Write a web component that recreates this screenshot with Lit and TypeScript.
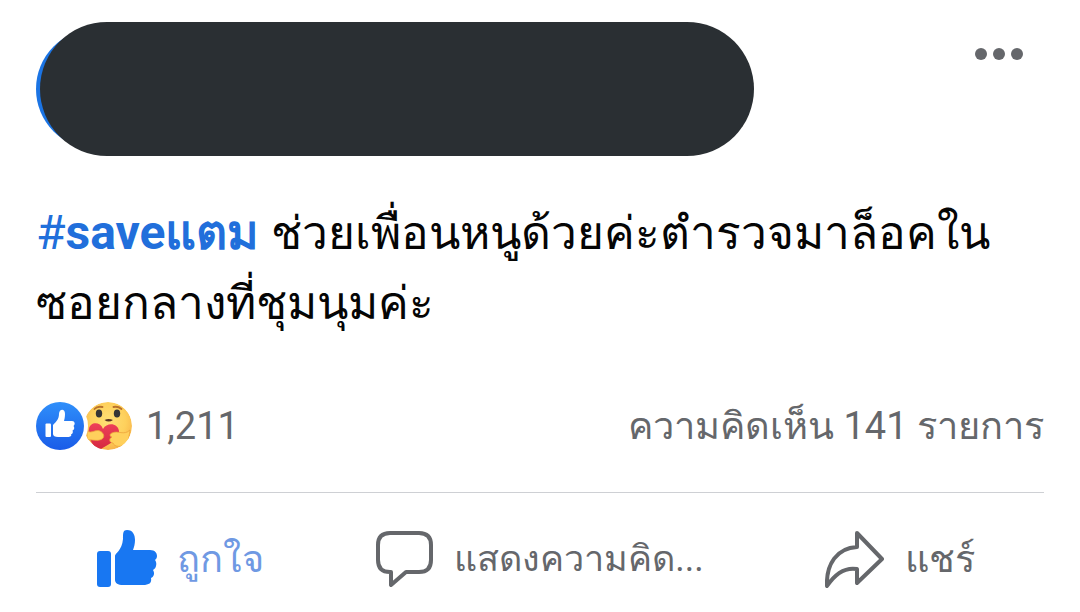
import { LitElement, html, css } from "lit";
import { customElement, property } from "lit/decorators.js";

@customElement("post-header")
class PostHeader extends LitElement {
  static styles = css`
    :host { display: flex; justify-content: space-between; align-items: flex-start; }
    .author { position: relative; display: flex; align-items: center; flex: 0 1 718px; height: 134px; }
    .avatar { width: 120px; height: 120px; border-radius: 50%; background: #1b74e4; }
    .cover { position: absolute; inset: 0 0 0 4px; border-radius: 67px; background: #2a2f33; }
    .more { border: 0; background: none; padding: 26px 20px; margin: 0; display: flex; cursor: pointer; }
    .more svg { display: block; }
  `;
  render() {
    return html`
      <div class="author"><div class="avatar"></div><div class="cover"></div></div>
      <button class="more" aria-label="เพิ่มเติม">
        <svg width="50" height="12" viewBox="0 0 50 12" fill="#65676b">
          <circle cx="7" cy="6" r="6" /><circle cx="25" cy="6" r="6" /><circle cx="43" cy="6" r="6" />
        </svg>
      </button>
    `;
  }
}

@customElement("post-reactions")
class PostReactions extends LitElement {
  @property() count = "";
  @property() comments = "";
  static styles = css`
    :host { display: flex; justify-content: space-between; align-items: center; color: #65676b; font-size: 38px; line-height: 56px; }
    .group { display: flex; align-items: center; gap: 12px; }
    svg { display: block; }
  `;
  render() {
    return html`
      <div class="group">
        <svg width="98" height="48" viewBox="0 0 98 48">
          <defs>
            <linearGradient id="blue" x1="0" y1="0" x2="0" y2="1"><stop offset="0" stop-color="#2f8ffa" /><stop offset="1" stop-color="#1a5ce8" /></linearGradient>
            <radialGradient id="face" cx=".5" cy=".4" r=".62"><stop offset="0" stop-color="#ffe076" /><stop offset=".6" stop-color="#fed05c" /><stop offset="1" stop-color="#f7b047" /></radialGradient>
            <linearGradient id="heart" x1="0" y1="0" x2="0" y2="1"><stop offset="0" stop-color="#ee4058" /><stop offset="1" stop-color="#d3263f" /></linearGradient>
            <clipPath id="disc"><circle cx="72" cy="24" r="24" /></clipPath>
          </defs>
          <g clip-path="url(#disc)">
            <circle cx="72" cy="24" r="24" fill="url(#face)" />
            <path d="M58.500 7Q61 4 66.500 5M77.500 5Q82 4 85.500 7" fill="none" stroke="#b9722c" stroke-width="1.800" stroke-linecap="round" />
            <ellipse cx="63" cy="11.500" rx="3.200" ry="4" fill="#363535" />
            <ellipse cx="81" cy="11.500" rx="3.200" ry="4" fill="#363535" />
            <path d="M68.500 18Q72.500 16 77 18Q72.500 21 68.500 18Z" fill="#5a3423" />
            <path d="M62 49C57 43 51 35 53 27C54 20 64 19 67 27C71 20 82 21 83 29C84 38 72 42 62 49Z" fill="url(#heart)" />
            <path d="M51 29C56 32 59 27 64 29C68 31 69 35 66 37C61 40 56 37 51 38Z" fill="#ffd05c" stroke="#eca43c" stroke-width=".8" />
            <path d="M94 28C88 34 82 28 76 31C73 32 74 35 76 35C72 37 74 41 77 41C78 45 86 46 92 41Z" fill="#ffd05c" stroke="#eca43c" stroke-width=".8" />
          </g>
          <circle cx="24" cy="24" r="28" fill="#fff" />
          <circle cx="24" cy="24" r="24" fill="url(#blue)" />
          <rect x="9.500" y="21.500" width="5.500" height="13.500" rx="1" fill="#fff" />
          <path d="M17 23C20 20 23 17 23 12C23 7 29 6 29 12C29 15 28.500 17 28 19H36C39 19 39.500 22.500 37.500 24C39 26 38 28 36.500 28.500C37.500 31 36 32 35 32.500C36 34 34 35 32 35H22C19 35 17 34 17 32Z" fill="#fff" />
        </svg>
        <span>${this.count}</span>
      </div>
      <span>${this.comments}</span>
    `;
  }
}

@customElement("post-actions")
class PostActions extends LitElement {
  static styles = css`
    :host { display: grid; grid-template-columns: 2fr 3fr 2fr; border-top: 1px solid #ced0d4; padding-top: 32px; }
    button { display: flex; align-items: center; justify-content: center; gap: 20px; border: 0; padding: 0; margin: 0; background: none; color: #65676b; font-family: inherit; font-size: 38px; line-height: 68px; white-space: nowrap; cursor: pointer; }
    .liked { color: #6f99e3; }
    .comment { font-size: 36px; }
    svg { display: block; flex: none; }
  `;
  render() {
    return html`
      <button class="liked">
        <svg width="60" height="58" viewBox="0 0 60 58" fill="#1877f2">
          <rect x="0" y="21" width="14" height="36" rx="3" />
          <path d="M18 26C18 23 25 21 26 9C26 3 26 0 30 0C36 0 38 5 38 10C38 14 37 17 36 20H53C58 20 60 23 60 26C60 28 59 29 58 30C60 32 60 38 56 40C58 43 57 47 54 48C55 53 52 55 46 55H26C21 55 18 53 18 50Z" />
        </svg>
        <span>ถูกใจ</span>
      </button>
      <button class="comment">
        <svg width="58" height="56" viewBox="0 0 58 56" fill="none" stroke="#65676b" stroke-width="4" stroke-linejoin="round">
          <path d="M14 2H43Q55 2 55 14V29Q55 41 43 41H30L15 54V41H14Q2 41 2 29V14Q2 2 14 2Z" />
        </svg>
        <span>แสดงความคิด...</span>
      </button>
      <button>
        <svg width="60" height="58" viewBox="0 0 60 58" fill="none" stroke="#65676b" stroke-width="4" stroke-linejoin="round">
          <path d="M32 3L57 29L32 53V39C20 37 10 44 2 56C1 34 12 18 32 17Z" />
        </svg>
        <span>แชร์</span>
      </button>
    `;
  }
}

@customElement("app-root")
class AppRoot extends LitElement {
  static styles = css`
    :host { display: block; min-height: 100vh; box-sizing: border-box; padding: 22px 36px 0; background: #fff; color: #050505; font-family: Roboto, "Noto Sans", sans-serif; }
    .message { margin: 42px 0 60px; font-size: 46px; line-height: 70px; }
    .tag { color: #216fdb; font-size: 48px; text-decoration: none; }
    .tag b { font-weight: 700; }
    post-actions { margin-top: 38px; }
  `;
  render() {
    return html`
      <post-header></post-header>
      <p class="message"><a class="tag" href="#save">#<b>saveแตม</b></a> ช่วยเพื่อนหนูด้วยค่ะตำรวจมาล็อคใน<br />ซอยกลางที่ชุมนุมค่ะ</p>
      <post-reactions count="1,211" comments="ความคิดเห็น 141 รายการ"></post-reactions>
      <post-actions></post-actions>
    `;
  }
}
